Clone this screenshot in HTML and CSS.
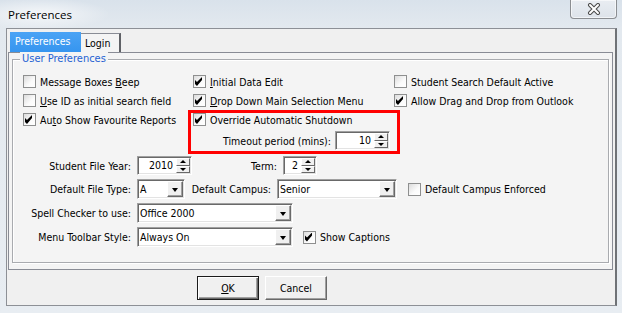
FILE: index.html
```html
<!DOCTYPE html>
<html lang="en">
<head>
  <meta charset="UTF-8" />
  <title>Preferences</title>
  <link rel="stylesheet" href="styles.css">
</head>
<body>
  <div class="window">
    <div class="titlebar">
      <span class="title">Preferences</span>
      <div class="close">
        <svg width="14" height="12" viewBox="0 0 14 12">
          <path d="M3 2 L11 10 M11 2 L3 10" stroke="#4a4a4a" stroke-width="4" stroke-linecap="round" fill="none"/>
          <path d="M3 2 L11 10 M11 2 L3 10" stroke="#fff" stroke-width="2" stroke-linecap="round" fill="none"/>
        </svg>
      </div>
    </div>

    <div class="client">
      <div class="tabs">
        <div class="tab active">Preferences</div>
        <div class="tab">Login</div>
      </div>

      <div class="panel">
        <div class="group">
          <div class="legend">User Preferences</div>

          <div class="checks">
            <label class="check"><span class="box"></span><span>Message Boxes <u>B</u>eep</span></label>
            <label class="check"><span class="box on"></span><span><u>I</u>nitial Data Edit</span></label>
            <label class="check"><span class="box"></span><span>Student Search Default Active</span></label>

            <label class="check"><span class="box"></span><span><u>U</u>se ID as initial search field</span></label>
            <label class="check"><span class="box on"></span><span><u>D</u>rop Down Main Selection Menu</span></label>
            <label class="check"><span class="box on"></span><span>Allow Drag and Drop from Outlook</span></label>

            <label class="check"><span class="box on"></span><span>Au<u>t</u>o Show Favourite Reports</span></label>
            <label class="check"><span class="box on"></span><span>Override Automatic Shutdown</span></label>
            <span></span>
          </div>

          <div class="row timeout">
            <span class="label timeout-label">Timeout period (mins):</span>
            <div class="spin spin-timeout">
              <span class="val">10</span>
              <span class="arrows"><i class="up"></i><i class="down"></i></span>
            </div>
          </div>

          <div class="row row-year">
            <span class="label">Student File Year:</span>
            <div class="spin spin-year">
              <span class="val">2010</span>
              <span class="arrows"><i class="up"></i><i class="down"></i></span>
            </div>
            <span class="label label-term">Term:</span>
            <div class="spin spin-term">
              <span class="val">2</span>
              <span class="arrows"><i class="up"></i><i class="down"></i></span>
            </div>
          </div>

          <div class="row">
            <span class="label">Default File Type:</span>
            <div class="combo combo-type">
              <span class="val">A</span>
              <span class="drop"></span>
            </div>
            <span class="label label-campus">Default Campus:</span>
            <div class="combo combo-campus">
              <span class="val">Senior</span>
              <span class="drop"></span>
            </div>
            <label class="check check-enforced"><span class="box"></span><span>Default Campus Enforced</span></label>
          </div>

          <div class="row">
            <span class="label">Spell Checker to use:</span>
            <div class="combo combo-wide">
              <span class="val">Office 2000</span>
              <span class="drop"></span>
            </div>
          </div>

          <div class="row">
            <span class="label">Menu Toolbar Style:</span>
            <div class="combo combo-wide">
              <span class="val">Always On</span>
              <span class="drop"></span>
            </div>
            <label class="check check-captions"><span class="box on"></span><span>Show Captions</span></label>
          </div>

          <div class="highlight"></div>
        </div>
      </div>

      <div class="buttons">
        <button class="btn default"><u>O</u>K</button>
        <button class="btn">Cancel</button>
      </div>
    </div>
  </div>
</body>
</html>
```

FILE: styles.css
```css
* {
  box-sizing: border-box;
}

html, body {
  margin: 0;
  padding: 0;
  background: #e5ebf0;
}

body {
  font-family: "DejaVu Sans Condensed", "DejaVu Sans", sans-serif;
  font-size: 10.5px;
  color: #000;
}

.window {
  width: 622px;
  height: 313px;
  background: linear-gradient(180deg, #d9e2eb 0, #e3e9ef 28px, #e8edf2 100%);
  overflow: hidden;
}

/* title bar */
.titlebar {
  height: 28px;
  display: flex;
  align-items: flex-start;
  background: radial-gradient(ellipse 70px 16px at 40px 14px, rgba(255,255,255,0.7), rgba(255,255,255,0));
}

.title {
  margin: 7px 0 0 8px;
  font-family: "Open Sans", sans-serif;
  font-size: 11.5px;
  line-height: 15px;
  color: #000;
}

.close {
  margin-left: auto;
  margin-right: 5px;
  width: 47px;
  height: 19px;
  border: 1px solid #8b8e92;
  border-top: none;
  border-radius: 0 0 4px 4px;
  background: linear-gradient(180deg, #e9edf2, #dde3ea);
  box-shadow: inset 0 0 0 1px rgba(255,255,255,0.6);
  display: flex;
  align-items: center;
  justify-content: center;
}

/* client area */
.client {
  margin-left: 6px;
  width: 611px;
  height: 278px;
  border: 1px solid #8d9096;
  border-right: 2px solid #6f7276;
  background: #f0f0f0;
}

.tabs {
  display: flex;
  align-items: flex-end;
  margin: 3px 0 0 3px;
  height: 20px;
}

.tab {
  height: 19px;
  width: 40px;
  padding-left: 4px;
  line-height: 18px;
  background: #f4f4f4;
  border-top: 1px solid #898c95;
  border-right: 2px solid #5f6166;
}

.tab.active {
  height: 20px;
  width: 71px;
  padding-left: 5px;
  line-height: 19px;
  color: #fff;
  border: none;
  background: linear-gradient(180deg, #4aa3f5, #3695ef);
}

.panel {
  margin-left: 1px;
  width: 605px;
  height: 218px;
  border: 1px solid #898c95;
  background: #f4f4f4;
  padding: 6px 0 0 3px;
}

/* group box */
.group {
  position: relative;
  width: 597px;
  height: 204px;
  border: 1px solid #a9abaf;
  box-shadow: inset 1px 1px 0 #fff, 1px 1px 0 #fff;
  padding: 12px 0 0 10px;
}

.legend {
  position: absolute;
  top: -8px;
  left: 7px;
  padding: 0 2px;
  line-height: 14px;
  background: #f4f4f4;
  color: #1f62d3;
  font-size: 11px;
}

.checks {
  display: grid;
  grid-template-columns: 170px 201px 1fr;
  grid-auto-rows: 19px;
}

.check {
  display: flex;
  align-items: center;
  gap: 4px;
  white-space: nowrap;
}

.box {
  flex: none;
  width: 13px;
  height: 13px;
  border: 1px solid #8e8f8f;
  background: linear-gradient(135deg, #dcdcdc, #fbfbfb 60%, #fff);
  position: relative;
}

.box.on::after {
  content: "";
  position: absolute;
  left: 1px;
  top: 1px;
  width: 9px;
  height: 9px;
  background: #000;
  clip-path: polygon(0 33%, 22% 55%, 78% 0, 78% 33%, 22% 100%, 0 78%);
}

/* form rows */
.row {
  display: flex;
  align-items: center;
  height: 20px;
  margin-top: 4px;
}

.row-year {
  height: 19px;
  margin-top: 6px;
}

.row.timeout {
  height: 19px;
  margin-top: 2px;
  padding-left: 170px;
}

.label {
  flex: none;
  width: 108px;
  margin-right: 6px;
  text-align: right;
  white-space: nowrap;
}

.timeout-label {
  width: 138px;
  margin-right: 4px;
}

.label-term {
  width: 85px;
}

.label-campus {
  width: 86px;
}

.spin, .combo {
  display: flex;
  flex: none;
  background: #fff;
  border: 1px solid;
  border-color: #a0a0a0 #fff #fff #a0a0a0;
  box-shadow: inset 1px 1px 0 #696969, inset -1px -1px 0 #e3e3e3;
  padding: 1px;
}

.spin {
  height: 19px;
}

.combo {
  height: 20px;
}

.val {
  flex: 1;
  line-height: 15px;
  white-space: nowrap;
  overflow: hidden;
}

.spin .val {
  text-align: right;
  padding-right: 3px;
}

.combo .val {
  padding-left: 1px;
  line-height: 16px;
}

.spin-timeout { width: 55px; }
.spin-year { width: 55px; }
.spin-term { width: 34px; }
.combo-type { width: 48px; }
.combo-campus { width: 120px; }
.combo-wide { width: 156px; }

.arrows {
  flex: none;
  width: 14px;
  display: flex;
  flex-direction: column;
}

.arrows i {
  flex: 1;
  position: relative;
  background: #f0f0f0;
  border: 1px solid;
  border-color: #fff #696969 #696969 #fff;
}

.arrows i::before {
  content: "";
  position: absolute;
  left: 3px;
  border-left: 3px solid transparent;
  border-right: 3px solid transparent;
}

.arrows .up::before {
  top: 1px;
  border-bottom: 3px solid #000;
}

.arrows .down::before {
  top: 1px;
  border-top: 3px solid #000;
}

.drop {
  flex: none;
  width: 16px;
  position: relative;
  background: #f0f0f0;
  border: 1px solid;
  border-color: #fff #696969 #696969 #fff;
  box-shadow: inset -1px -1px 0 #a0a0a0;
}

.drop::before {
  content: "";
  position: absolute;
  left: 4px;
  top: 6px;
  border-left: 3.5px solid transparent;
  border-right: 3.5px solid transparent;
  border-top: 4px solid #000;
}

.check-enforced {
  margin-left: 11px;
}

.check-captions {
  margin-left: 10px;
}

/* red annotation box */
.highlight {
  position: absolute;
  left: 175px;
  top: 50px;
  width: 212px;
  height: 44px;
  border: 3px solid #f00;
  pointer-events: none;
}

/* dialog buttons */
.buttons {
  display: flex;
  gap: 6px;
  margin-top: 6px;
  padding-left: 190px;
}

.btn {
  width: 62px;
  height: 24px;
  padding: 0;
  font-family: inherit;
  font-size: 10.5px;
  color: #000;
  background: #f0f0f0;
  border: 1px solid;
  border-color: #fff #696969 #696969 #fff;
  box-shadow: inset -1px -1px 0 #a0a0a0;
}

.btn.default {
  border: 1px solid #1b1b1b;
  box-shadow: inset 1px 1px 0 #fff, inset -1px -1px 0 #696969, inset -2px -2px 0 #a0a0a0;
}
```
